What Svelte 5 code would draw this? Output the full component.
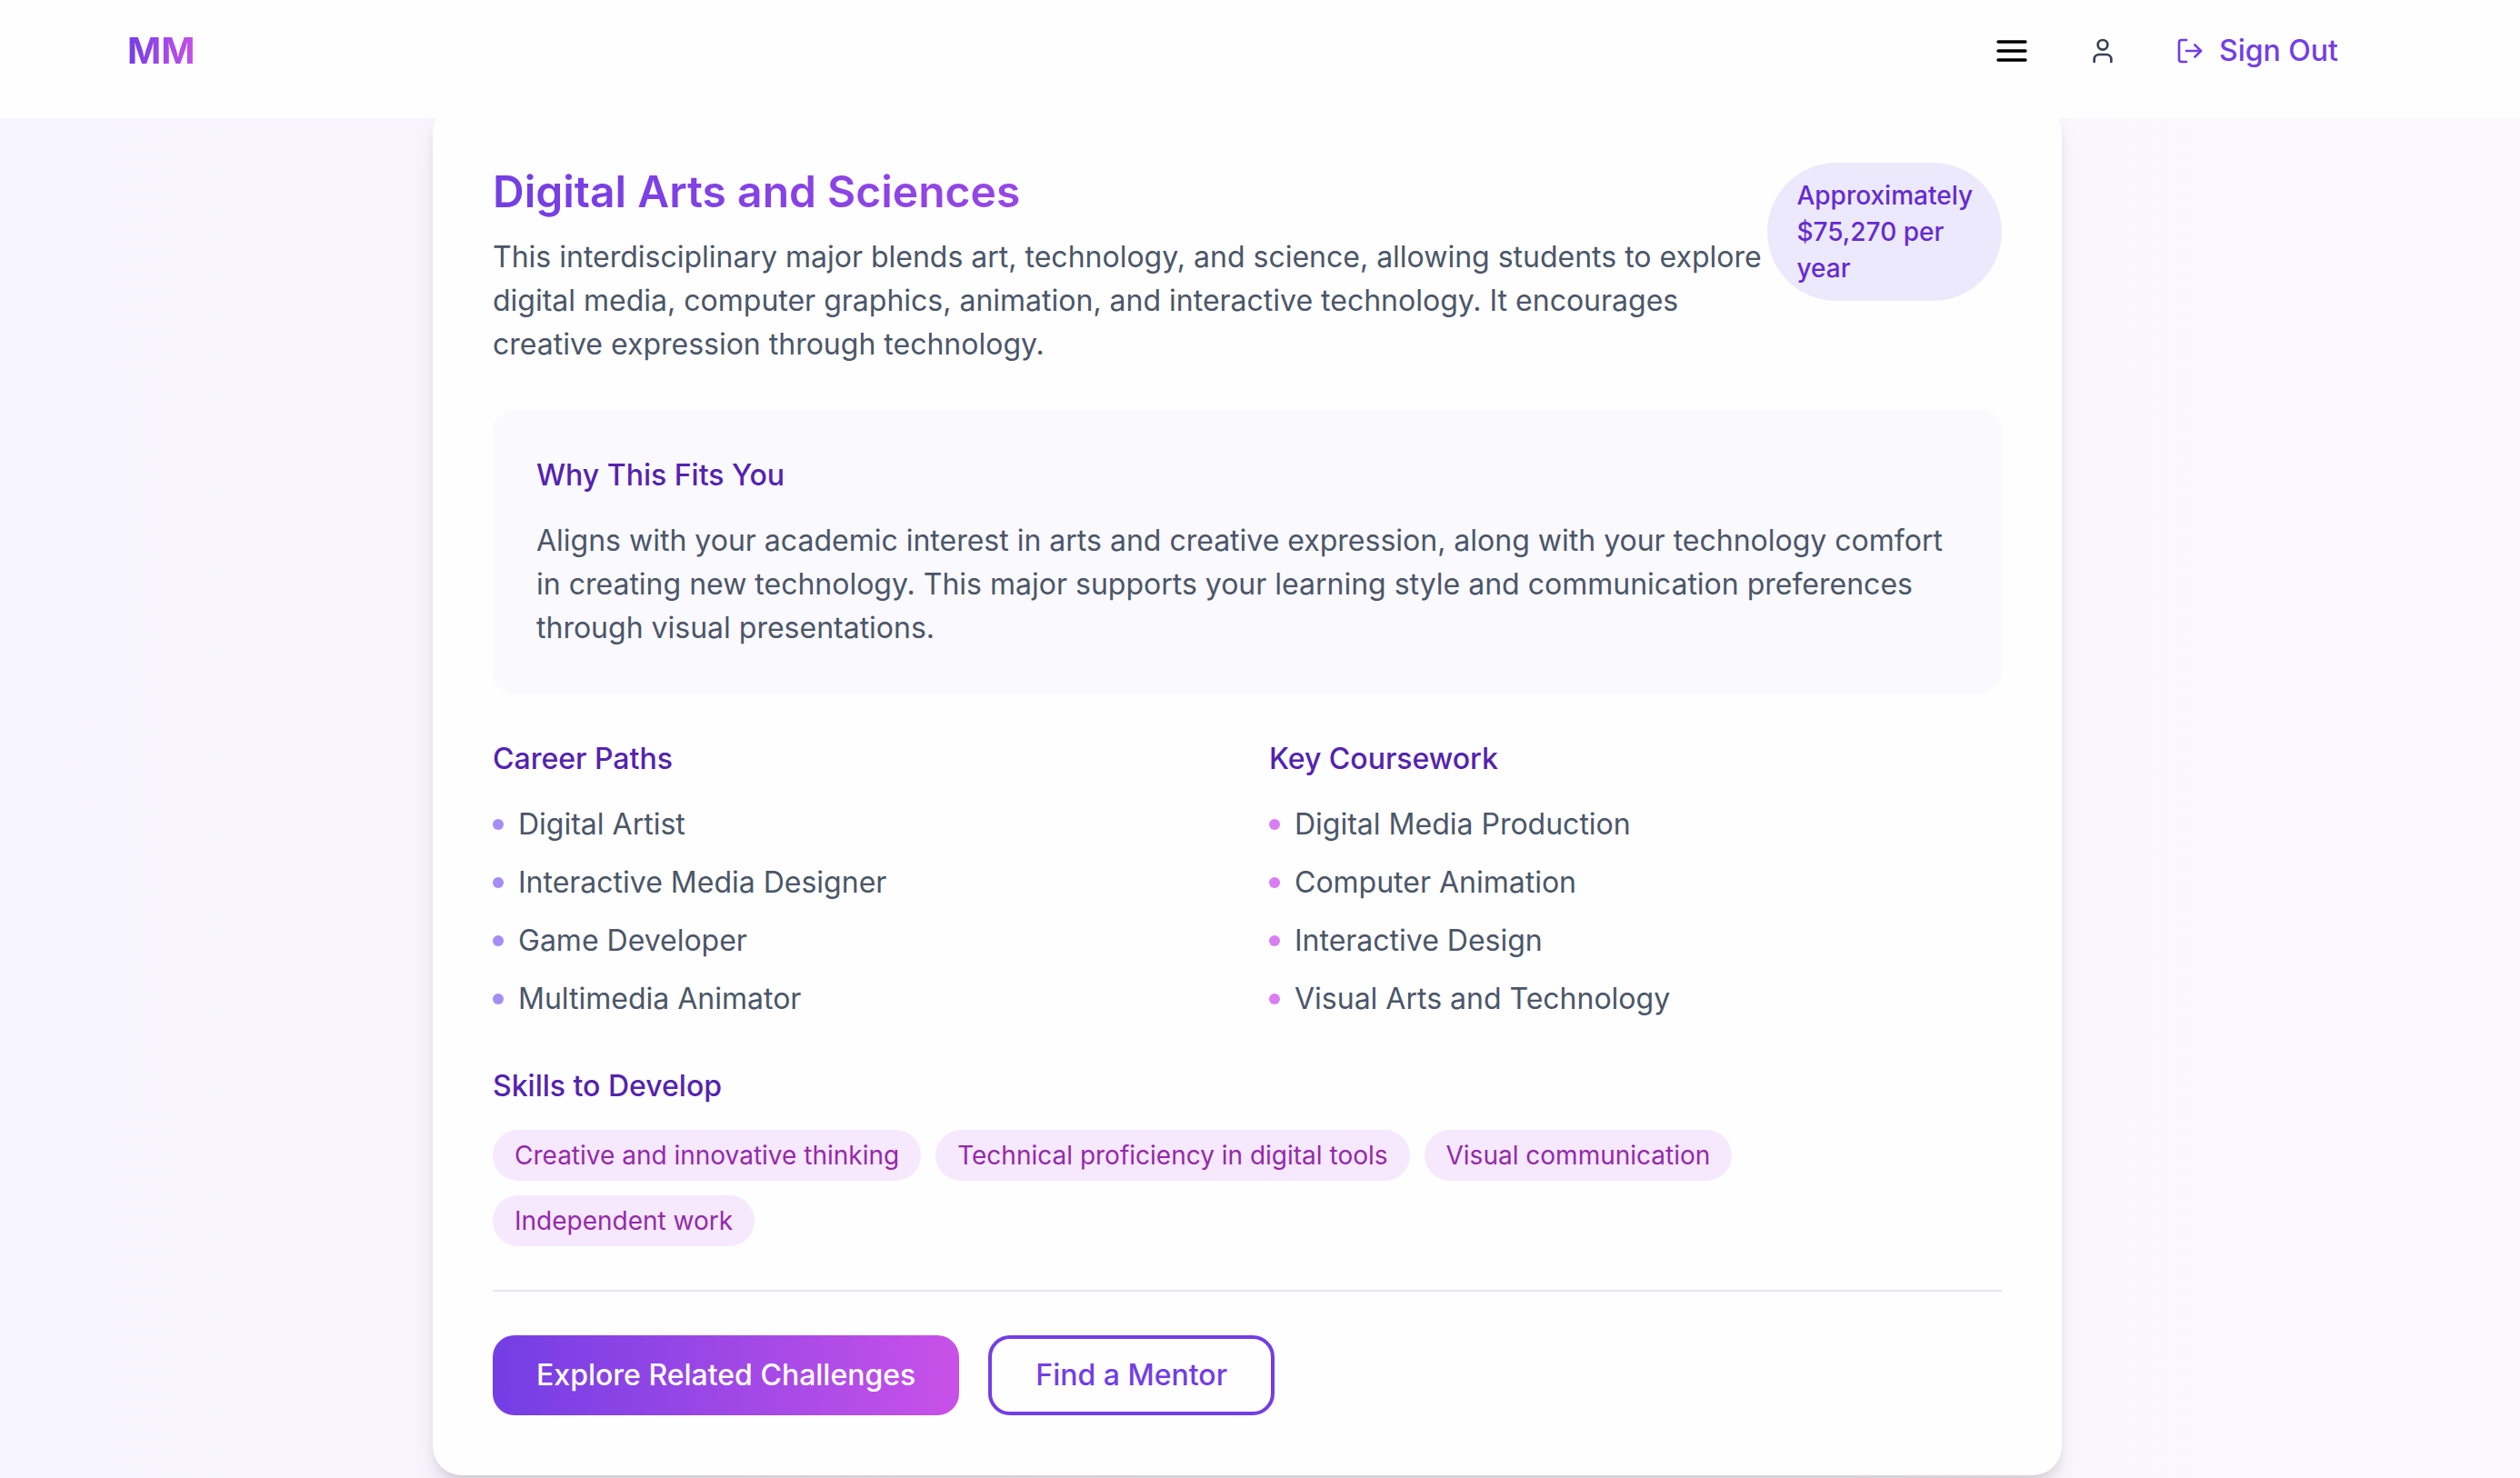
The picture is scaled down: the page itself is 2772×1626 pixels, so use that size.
<script>
  const careers = ['Digital Artist', 'Interactive Media Designer', 'Game Developer', 'Multimedia Animator'];
  const courses = ['Digital Media Production', 'Computer Animation', 'Interactive Design', 'Visual Arts and Technology'];
  const skills = [
    'Creative and innovative thinking',
    'Technical proficiency in digital tools',
    'Visual communication',
    'Independent work'
  ];
</script>

<div class="page">
  <header class="topbar">
    <div class="topbar-inner">
      <a class="logo" href="#home">MM</a>
      <nav class="actions" aria-label="Account">
        <button class="icon-btn menu" type="button" aria-label="Menu">
          <svg width="40" height="40" viewBox="0 0 24 24" aria-hidden="true">
            <path d="M3 6h18M3 12h18M3 18h18" />
          </svg>
        </button>
        <button class="icon-btn profile" type="button" aria-label="Profile">
          <svg width="32" height="32" viewBox="0 0 24 24" aria-hidden="true">
            <path d="M19 21v-2a4 4 0 0 0-4-4H9a4 4 0 0 0-4 4v2" />
            <circle cx="12" cy="7" r="4" />
          </svg>
        </button>
        <button class="sign-out" type="button">
          <svg width="32" height="32" viewBox="0 0 24 24" aria-hidden="true">
            <path d="M9 21H5a2 2 0 0 1-2-2V5a2 2 0 0 1 2-2h4" />
            <path d="m16 17 5-5-5-5" />
            <path d="M21 12H9" />
          </svg>
          Sign Out
        </button>
      </nav>
    </div>
  </header>

  <main>
    <article class="card">
      <div class="intro">
        <div>
          <h2>Digital Arts and Sciences</h2>
          <p>
            This interdisciplinary major blends art, technology, and science, allowing students to explore
            digital media, computer graphics, animation, and interactive technology. It encourages creative
            expression through technology.
          </p>
        </div>
        <span class="salary">Approximately $75,270 per year</span>
      </div>

      <section class="fit">
        <h3>Why This Fits You</h3>
        <p>
          Aligns with your academic interest in arts and creative expression, along with your technology
          comfort in creating new technology. This major supports your learning style and communication
          preferences through visual presentations.
        </p>
      </section>

      <div class="columns">
        <section>
          <h3>Career Paths</h3>
          <ul class="list careers">
            {#each careers as item}
              <li>{item}</li>
            {/each}
          </ul>
        </section>
        <section>
          <h3>Key Coursework</h3>
          <ul class="list courses">
            {#each courses as item}
              <li>{item}</li>
            {/each}
          </ul>
        </section>
      </div>

      <section>
        <h3>Skills to Develop</h3>
        <ul class="skills">
          {#each skills as skill}
            <li>{skill}</li>
          {/each}
        </ul>
      </section>

      <footer class="card-actions">
        <button class="primary" type="button">Explore Related Challenges</button>
        <button class="secondary" type="button">Find a Mentor</button>
      </footer>
    </article>
  </main>
</div>

<style>
  :global(body) {
    margin: 0;
  }

  .page {
    --violet: #733ee4;
    --violet-dark: #5423ae;
    --pink: #c851e8;
    --text: #4b5668;
    box-sizing: border-box;
    min-height: 100vh;
    overflow: hidden;
    background: linear-gradient(to right, #f6f4fe, #f7f4fe 20%, #fbf6fe 80%, #fbf7fd);
    color: var(--text);
    font-family: Inter, 'Liberation Sans', sans-serif;
    font-size: 32px;
    line-height: 48px;
  }

  h2,
  h3,
  p,
  ul {
    margin: 0;
    padding: 0;
  }

  ul {
    list-style: none;
  }

  button {
    margin: 0;
    border: 0;
    background: none;
    font: inherit;
    font-weight: 500;
    cursor: pointer;
  }

  svg {
    display: block;
    fill: none;
    stroke: currentColor;
    stroke-width: 2;
    stroke-linecap: round;
    stroke-linejoin: round;
  }

  .topbar {
    position: fixed;
    inset: 0 0 auto;
    z-index: 1;
    padding: 0 28px 18px 0;
    background: #fefefe;
  }

  .topbar-inner {
    display: flex;
    align-items: center;
    justify-content: space-between;
    box-sizing: border-box;
    max-width: 2560px;
    height: 112px;
    margin: 0 auto;
    padding: 0 48px;
  }

  .logo {
    background: linear-gradient(to right, var(--violet), var(--pink));
    background-clip: text;
    color: transparent;
    font-size: 40px;
    font-weight: 700;
    line-height: 56px;
    text-decoration: none;
  }

  .actions {
    display: flex;
    align-items: center;
  }

  .icon-btn {
    padding: 16px;
  }

  .menu {
    margin-right: 32px;
    color: #000;
  }

  .profile {
    margin-right: 16px;
    color: #364153;
  }

  .sign-out {
    display: flex;
    align-items: center;
    gap: 16px;
    padding: 8px 32px;
    color: var(--violet);
  }

  main {
    padding: 113px 28px 0 0;
  }

  .card {
    display: grid;
    gap: 48px;
    box-sizing: border-box;
    max-width: 1792px;
    margin: 0 auto;
    padding: 66px;
    border-radius: 32px;
    background: #fefefe;
    box-shadow:
      0 20px 30px -6px rgb(0 0 0 / 0.1),
      0 8px 12px -4px rgb(0 0 0 / 0.1);
  }

  .intro {
    display: flex;
    align-items: flex-start;
    justify-content: space-between;
  }

  h2 {
    margin-bottom: 16px;
    background: linear-gradient(to right, var(--violet), var(--pink));
    background-clip: text;
    color: transparent;
    font-size: 48px;
    font-weight: 600;
    line-height: 64px;
  }

  h3 {
    margin-bottom: 24px;
    color: var(--violet-dark);
    font-size: 32px;
    font-weight: 500;
    line-height: 48px;
  }

  .salary {
    padding: 16px 32px;
    border-radius: 76px;
    background: #ece9fc;
    color: #652bd0;
    font-size: 28px;
    font-weight: 500;
    line-height: 40px;
  }

  .fit {
    padding: 48px;
    border-radius: 24px;
    background: #faf9fe;
  }

  .columns {
    display: grid;
    grid-template-columns: 1fr 1fr;
    gap: 48px;
  }

  .list {
    display: grid;
    gap: 16px;
  }

  .list li {
    display: flex;
    align-items: center;
    gap: 16px;
  }

  .list li::before {
    content: '';
    width: 12px;
    height: 12px;
    border-radius: 50%;
    background: #a48df5;
  }

  .courses li::before {
    background: #d97df3;
  }

  .skills {
    display: flex;
    flex-wrap: wrap;
    gap: 16px;
  }

  .skills li {
    padding: 8px 24px;
    border-radius: 28px;
    background: #f6e8fd;
    color: #9529a9;
    font-size: 28px;
    line-height: 40px;
  }

  .card-actions {
    display: flex;
    gap: 32px;
    padding-top: 48px;
    border-top: 2px solid #e3e8ef;
  }

  .card-actions button {
    border-radius: 24px;
  }

  .primary {
    padding: 20px 48px;
    background: linear-gradient(to right, var(--violet), var(--pink));
    color: #fff;
  }

  .card-actions .secondary {
    padding: 16px 48px;
    border: 4px solid var(--violet);
    color: var(--violet);
  }
</style>
